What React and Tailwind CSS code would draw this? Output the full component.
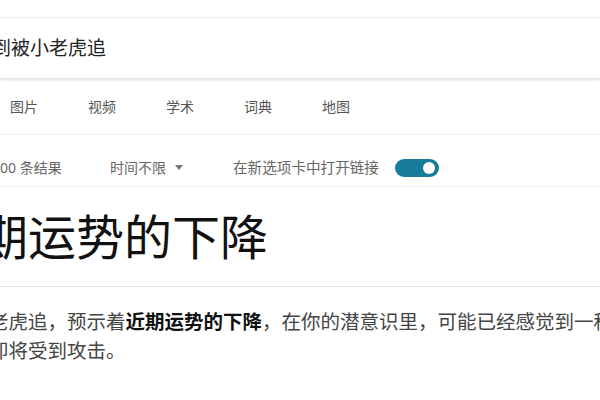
import React from 'react';

const tabs = ['图片', '视频', '学术', '词典', '地图'];

const App = () => {
  return (
    <div className="w-[600px] h-[400px] bg-white overflow-hidden font-['Noto_Sans','Noto_Sans_CJK_SC',sans-serif]">
      {/* search box */}
      <div className="mt-[17px] h-[61px] border-t border-[#ededed] shadow-[0_2px_3px_rgba(0,0,0,0.13)] flex items-center">
        <span className="-ml-[8px] text-[19px] text-[#222] whitespace-nowrap">到被小老虎追</span>
      </div>

      {/* tabs */}
      <div className="h-[57px] flex items-center gap-[50px] pl-[10px] border-b border-[#eeeeee] text-[14px] text-[#555]">
        {tabs.map(t => (
          <span key={t} className="whitespace-nowrap">{t}</span>
        ))}
      </div>

      {/* filters */}
      <div className="h-[52px] flex items-center pt-[16px] pb-[2px] border-b border-[#eeeeee] text-[14px] text-[#666]">
        <span className="whitespace-nowrap w-[110px]">00 条结果</span>
        <span className="whitespace-nowrap flex items-center w-[123px]">
          时间不限
          <svg width="8" height="5" viewBox="0 0 8 5" className="ml-[9px]">
            <path d="M0 0h8L4 5z" fill="#777" />
          </svg>
        </span>
        <span className="whitespace-nowrap text-[14.6px]">在新选项卡中打开链接</span>
        <div className="ml-[16px] w-[44px] h-[18px] rounded-full bg-[#177c97] flex items-center justify-end pr-[4px]">
          <div className="w-[12px] h-[12px] rounded-full bg-white" />
        </div>
      </div>

      {/* heading */}
      <div className="h-[100px] flex items-center border-b border-[#e6e6e6]">
        <h1 className="-ml-[20px] text-[48px] leading-none text-[#111] font-normal whitespace-nowrap">期运势的下降</h1>
      </div>

      {/* snippet */}
      <div className="pt-[20px] text-[19.5px] leading-[29px] text-[#444] -ml-[11px]">
        <div className="whitespace-nowrap">
          老虎追，预示着<b className="font-bold text-[#111]">近期运势的下降</b>，在你的潜意识里，可能已经感觉到一种
        </div>
        <div className="whitespace-nowrap">即将受到攻击。</div>
      </div>
    </div>
  );
};

export default App;
